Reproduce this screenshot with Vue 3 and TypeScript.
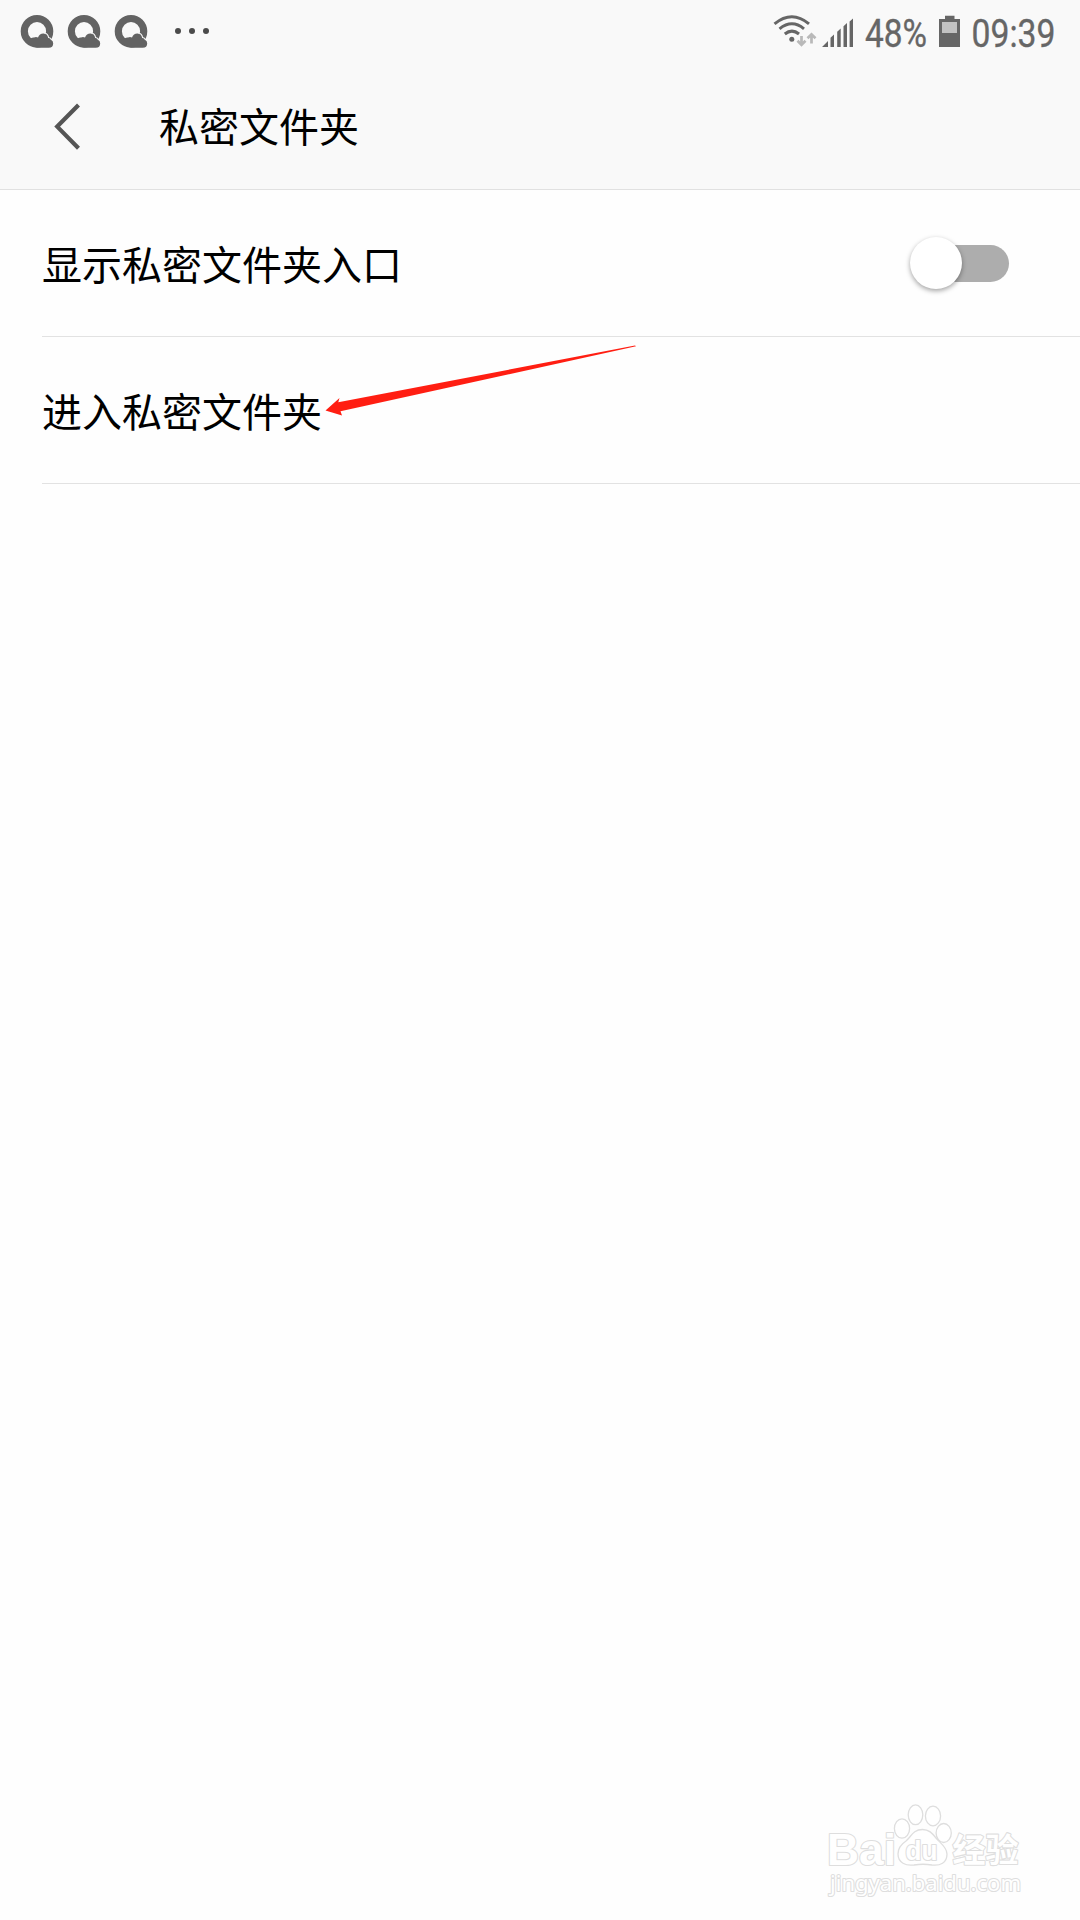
<script setup lang="ts">
const notifications: number[] = [1, 2, 3]
</script>

<template>
  <main class="screen">
    <header class="top">
      <div class="status">
        <div class="notices">
          <svg v-for="n in notifications" :key="n" class="browser" width="34" height="34" viewBox="0 0 34 34">
            <circle cx="17" cy="17.200" r="12.700" fill="none" stroke="#636363" stroke-width="7.200" />
            <path d="M10 25.500q1.500-2.500 4-2q2-1 4 0q1.500-4 5.300-4q3.600 0 4.700 4.600q1 1.700 3.200 1.800q2 .8 2 3.600q0 4.200-4.500 4.200H17Q11 33 7 27z" fill="#636363" />
            <path d="M24.300 18.800q3.600 1 4.300 4.700q2 .1 2.900 2.300" fill="none" stroke="#f9f9f9" stroke-width="1.100" />
          </svg>
          <svg class="more" width="36" height="8" viewBox="0 0 36 8" fill="#4b4b4b">
            <circle cx="4" cy="4" r="3" /><circle cx="18" cy="4" r="3" /><circle cx="32" cy="4" r="3" />
          </svg>
        </div>
        <svg class="indicators" width="310" height="64" viewBox="770 0 310 64">
          <g fill="none" stroke="#666" stroke-width="3">
            <path d="M774.500 23.800Q792 9.600 809 23.800" />
            <path d="M779.500 28.800Q792 18.800 804 28.800" />
            <path d="M784.800 34Q792 28.200 799 34" />
          </g>
          <circle cx="791.800" cy="39.300" r="2.500" fill="#666" />
          <path d="M801.500 36v9M797.500 40.800l4 4L805.500 40.800M811.500 43.500v-9M807.500 38.300l4-4L815.500 38.300" fill="none" stroke="#b9b9b9" stroke-width="2.700" />
          <path d="M822 47L828 41V47zM830.500 47V37.800L834 34.500V47zM837.200 47V31.800L840.700 28.500V47zM843.500 47V26.300L847 23V47zM849.600 47V21.500L853 18.500V47z" fill="#666" />
          <g fill="#666" stroke="#666" stroke-width=".35" font-size="39.500">
            <text x="865" y="47" textLength="62" lengthAdjust="spacingAndGlyphs">48%</text>
            <text x="971.500" y="47" textLength="84" lengthAdjust="spacingAndGlyphs">09:39</text>
          </g>
          <path d="M945 15.800h9.500v3.200H960v28h-21V19h6z" fill="#666" />
          <path d="M942 22h15v11h-15z" fill="#c2c2c2" />
        </svg>
      </div>
      <div class="titlebar">
        <svg class="back" width="28" height="50" viewBox="0 0 28 50">
          <path d="M24.500 3L3.200 24.600L24.500 46.300" fill="none" stroke="#555" stroke-width="4.200" />
        </svg>
        <h1>私密文件夹</h1>
      </div>
    </header>
    <section class="list">
      <div class="row">
        <span>显示私密文件夹入口</span>
        <button class="toggle" role="switch" aria-checked="false"><i></i></button>
      </div>
      <div class="row">
        <span>进入私密文件夹</span>
        <svg class="arrow" width="314" height="74" viewBox="324 344 314 74">
          <path d="M325.500 410.500L339.500 398L338.300 402.300L635 345.500L636 346.300L340.500 411.300L342 415.500z" fill="#ff1e12" />
        </svg>
      </div>
    </section>
    <svg class="watermark" width="230" height="120" viewBox="0 0 230 120">
      <g fill="#fff" stroke="#dedede" stroke-width="1.300">
        <ellipse cx="92" cy="38.500" rx="7.600" ry="9.700" />
        <ellipse cx="105.500" cy="24.800" rx="7.300" ry="9.900" />
        <ellipse cx="123" cy="26" rx="7.600" ry="9.800" />
        <ellipse cx="133.700" cy="43" rx="7.600" ry="9.500" />
        <path d="M112.500 39.500C103 39.500 101 47 96 51C90 55 88 59 88 64C88 73 96 76 104 75C110 74 116 74 122 75C130 76 137 73 137 64C137 57 130 53 126 48C122 43 119 39.500 112.500 39.500z" />
        <g class="outline">
          <text x="17" y="74.500" font-size="44" font-weight="700" textLength="69" lengthAdjust="spacingAndGlyphs">Bai</text>
          <text class="du" x="95.500" y="69.500" font-size="27" textLength="32" lengthAdjust="spacingAndGlyphs">du</text>
          <text class="cn" x="142.500" y="72" font-size="33" font-weight="700" textLength="66" lengthAdjust="spacingAndGlyphs">经验</text>
          <text class="url" x="20" y="100.500" font-size="22.500" textLength="191" lengthAdjust="spacingAndGlyphs">jingyan.baidu.com</text>
        </g>
      </g>
    </svg>
  </main>
</template>

<style scoped>
.screen {
  position: relative;
  width: 1080px;
  height: 1920px;
  overflow: hidden;
  background: #fefefe;
  color: #000;
  font-family: Roboto, "Noto Sans CJK SC", sans-serif;
}
.top {
  box-sizing: border-box;
  height: 190px;
  background: #f9f9f9;
  border-bottom: 1px solid #e1e1e1;
}
.status {
  display: flex;
  justify-content: space-between;
  height: 64px;
}
.notices {
  display: flex;
  align-items: flex-start;
  padding: 14px 0 0 20px;
}
.browser { margin-right: 13px; }
.more { margin: 13px 0 0 12.500px; }
.titlebar {
  display: flex;
  align-items: center;
  height: 125px;
  padding-left: 53.500px;
}
.back { margin-right: 77.500px; }
h1 {
  margin: 0;
  padding-bottom: 4px;
  font-size: 40px;
  font-weight: 400;
  line-height: 60px;
  font-family: "Noto Sans CJK SC", sans-serif;
}
.list { padding-left: 42px; }
.row {
  position: relative;
  box-sizing: border-box;
  display: flex;
  align-items: center;
  justify-content: space-between;
  height: 147px;
  padding-right: 71px;
  border-bottom: 1px solid #e2e2e2;
  font-family: "Noto Sans CJK SC", sans-serif;
  font-size: 40px;
  line-height: 60px;
}
.toggle {
  position: relative;
  width: 76px;
  height: 37px;
  padding: 0;
  border: 0;
  border-radius: 19px;
  background: #adadad;
}
.toggle i {
  position: absolute;
  left: -23px;
  top: -8px;
  width: 52px;
  height: 52px;
  border-radius: 50%;
  background: #fff;
  box-shadow: 0 2px 5px rgba(0, 0, 0, 0.36);
}
.arrow {
  position: absolute;
  left: 282px;
  top: 7px;
}
.watermark {
  position: absolute;
  left: 810px;
  top: 1790px;
}
.outline {
  paint-order: stroke;
  stroke-width: 2.200px;
  stroke-linejoin: round;
}
.outline text { font-family: "Liberation Sans", sans-serif; }
.outline .du { font-weight: 700; }
.outline .cn { font-family: "Noto Sans CJK SC", sans-serif; }
.outline .url { font-family: "Noto Sans", sans-serif; }
</style>
